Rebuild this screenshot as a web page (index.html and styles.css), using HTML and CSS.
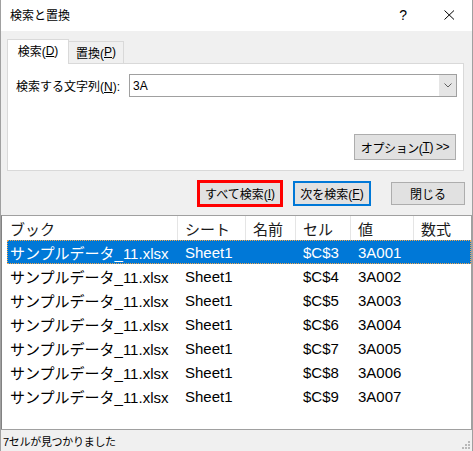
FILE: index.html
```html
<!DOCTYPE html>
<html lang="ja">
<head>
<meta charset="utf-8">
<title>検索と置換</title>
<link rel="stylesheet" href="styles.css">
</head>
<body>
<div class="win">
  <div class="titlebar">
    <span class="title">検索と置換</span>
    <span class="help">?</span>
    <svg class="close" width="11" height="10" viewBox="0 0 11 10"><path d="M0.5 0.5 L10 9.5 M10 0.5 L0.5 9.5" stroke="#000" stroke-width="1" fill="none"/></svg>
  </div>
  <div class="body">
    <div class="tabs">
      <div class="tab sel">検索(<u>D</u>)</div>
      <div class="tab">置換(<u>P</u>)</div>
    </div>
    <div class="panel">
      <div class="findrow">
        <span class="label">検索する文字列(<u>N</u>):</span>
        <div class="combo">
          <span class="val">3A</span>
          <div class="drop"><svg width="8" height="5" viewBox="0 0 8 5"><path d="M0.5 0.5 L4 4 L7.5 0.5" stroke="#606060" stroke-width="1" fill="none"/></svg></div>
        </div>
      </div>
      <div class="optrow"><div class="btn opt">オプション(<u>T</u>) &gt;&gt;</div></div>
    </div>
    <div class="btnrow">
      <div class="btn red">すべて検索(<u>I</u>)</div>
      <div class="btn blue">次を検索(<u>F</u>)</div>
      <div class="btn closebtn">閉じる</div>
    </div>
  </div>
  <div class="list">
    <div class="head">
      <div class="hc">ブック</div>
      <div class="hc">シート</div>
      <div class="hc">名前</div>
      <div class="hc">セル</div>
      <div class="hc">値</div>
      <div class="hc">数式</div>
    </div>
    <div class="row selrow"><div class="c">サンプルデータ_11.xlsx</div><div class="c">Sheet1</div><div class="c"></div><div class="c">$C$3</div><div class="c">3A001</div><div class="c"></div></div>
    <div class="row"><div class="c">サンプルデータ_11.xlsx</div><div class="c">Sheet1</div><div class="c"></div><div class="c">$C$4</div><div class="c">3A002</div><div class="c"></div></div>
    <div class="row"><div class="c">サンプルデータ_11.xlsx</div><div class="c">Sheet1</div><div class="c"></div><div class="c">$C$5</div><div class="c">3A003</div><div class="c"></div></div>
    <div class="row"><div class="c">サンプルデータ_11.xlsx</div><div class="c">Sheet1</div><div class="c"></div><div class="c">$C$6</div><div class="c">3A004</div><div class="c"></div></div>
    <div class="row"><div class="c">サンプルデータ_11.xlsx</div><div class="c">Sheet1</div><div class="c"></div><div class="c">$C$7</div><div class="c">3A005</div><div class="c"></div></div>
    <div class="row"><div class="c">サンプルデータ_11.xlsx</div><div class="c">Sheet1</div><div class="c"></div><div class="c">$C$8</div><div class="c">3A006</div><div class="c"></div></div>
    <div class="row"><div class="c">サンプルデータ_11.xlsx</div><div class="c">Sheet1</div><div class="c"></div><div class="c">$C$9</div><div class="c">3A007</div><div class="c"></div></div>
  </div>
  <div class="status">
    <span class="stext">7セルが見つかりました</span>
    <svg class="grip" width="10" height="10" viewBox="0 0 10 10">
      <rect x="7" y="1" width="2" height="2" fill="#b8b8b8"/>
      <rect x="4" y="4" width="2" height="2" fill="#b8b8b8"/>
      <rect x="7" y="4" width="2" height="2" fill="#b8b8b8"/>
      <rect x="1" y="7" width="2" height="2" fill="#b8b8b8"/>
      <rect x="4" y="7" width="2" height="2" fill="#b8b8b8"/>
      <rect x="7" y="7" width="2" height="2" fill="#b8b8b8"/>
    </svg>
  </div>
</div>
</body>
</html>
```
FILE: styles.css
```css
html, body {
  margin: 0;
  padding: 0;
  background: #ffffff;
}
body {
  font-family: "Liberation Sans", "Noto Sans CJK JP", sans-serif;
  font-size: 12px;
  color: #000;
}
u {
  text-decoration: underline;
  text-underline-offset: 1px;
}
.win {
  width: 473px;
  height: 451px;
  box-sizing: border-box;
  border-left: 1px solid #a0a0a0;
  border-right: 1px solid #a0a0a0;
  display: flex;
  flex-direction: column;
  overflow: hidden;
  background: #f0f0f0;
}
.titlebar {
  height: 31px;
  flex: none;
  background: #fff;
  display: flex;
  align-items: center;
  padding-left: 9px;
  box-sizing: border-box;
}
.title {
  font-size: 12px;
  flex: 1;
  padding-bottom: 2px;
}
.help {
  font-size: 14px;
  margin-right: 37px;
  padding-bottom: 2px;
}
.close {
  margin-right: 17px;
  margin-bottom: 2px;
}
.body {
  flex: none;
  padding: 8px 0 0 6px;
}
.tabs {
  display: flex;
  align-items: flex-end;
  height: 24px;
}
.tab {
  box-sizing: border-box;
  border: 1px solid #d9d9d9;
  border-bottom: none;
  display: flex;
  align-items: center;
  justify-content: center;
}
.tab.sel {
  width: 62px;
  height: 25px;
  margin-bottom: -1px;
  background: #fff;
  position: relative;
  z-index: 1;
  padding-bottom: 3px;
}
.tab:not(.sel) {
  width: 56px;
  height: 22px;
  margin-left: -1px;
  background: #f0f0f0;
  padding-bottom: 1px;
}
.panel {
  width: 457px;
  height: 108px;
  box-sizing: border-box;
  background: #fff;
  border: 1px solid #d9d9d9;
  padding: 10px 6px 0 8px;
}
.findrow {
  display: flex;
  align-items: center;
  height: 23px;
}
.label {
  width: 113px;
  flex: none;
}
.combo {
  width: 328px;
  height: 23px;
  box-sizing: border-box;
  border: 1px solid #a0a0a0;
  display: flex;
  align-items: center;
}
.val {
  flex: 1;
  padding-left: 3px;
  font-size: 12px;
}
.drop {
  width: 17px;
  height: 21px;
  background: #e5e5e5;
  display: flex;
  align-items: center;
  justify-content: center;
}
.optrow {
  display: flex;
  justify-content: flex-end;
  margin-top: 37px;
  padding-right: 1px;
}
.btn {
  box-sizing: border-box;
  background: #e1e1e1;
  border: 1px solid #adadad;
  display: flex;
  align-items: center;
  justify-content: center;
  white-space: nowrap;
}
.opt {
  width: 102px;
  height: 26px;
  letter-spacing: -0.4px;
}
.btnrow {
  display: flex;
  align-items: center;
  height: 27px;
  margin-top: 9px;
  padding-left: 190px;
}
.red {
  width: 86px;
  height: 27px;
  border: 3px solid #ff0000;
}
.blue {
  width: 78px;
  height: 25px;
  border: 2px solid #0078d7;
  margin-left: 10px;
}
.closebtn {
  width: 74px;
  height: 23px;
  margin-left: 20px;
}
.list {
  margin-top: 8px;
  height: 214px;
  box-sizing: border-box;
  border-top: 1px solid #a0a0a0;
  border-left: 1px solid #828282;
  border-right: 1px solid #a0a0a0;
  background: #fff;
  font-size: 15px;
}
.head {
  display: grid;
  grid-template-columns: 175px 68px 50px 55px 63px 1fr;
  height: 24px;
}
.hc {
  display: flex;
  align-items: center;
  padding-left: 7px;
  border-left: 1px solid #e5e5e5;
  color: #1a1a1a;
}
.hc:first-child {
  border-left: none;
  padding-left: 8px;
}
.row {
  display: grid;
  grid-template-columns: 170px 68px 50px 55px 63px 1fr;
  height: 24px;
  margin-left: 5px;
  box-sizing: border-box;
}
.c {
  display: flex;
  align-items: center;
  padding-left: 8px;
  white-space: nowrap;
}
.c:first-child {
  padding-left: 3px;
}
.selrow {
  background: #0078d7;
  color: #fff;
  outline: 1px dotted #f3a54a;
  outline-offset: -1px;
}
.status {
  flex: none;
  height: 22px;
  box-sizing: border-box;
  border-top: 1px solid #a0a0a0;
  background: #f0f0f0;
  display: flex;
  align-items: center;
  padding-left: 2px;
}
.stext {
  flex: 1;
  font-size: 11px;
  letter-spacing: -0.3px;
}
.grip {
  align-self: flex-end;
  margin-right: 1px;
  margin-bottom: 1px;
}
```
